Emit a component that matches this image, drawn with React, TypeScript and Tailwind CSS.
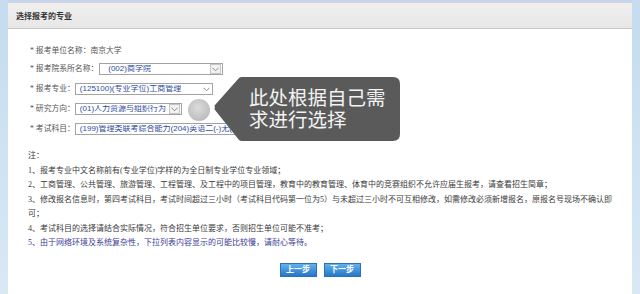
import React from 'react';

const serif = { fontFamily: '"Liberation Serif", "Noto Sans CJK SC", serif' };
const sans = { fontFamily: '"Liberation Sans", "Noto Sans CJK SC", sans-serif' };

function Chevron({ boxed }: { boxed?: boolean }) {
  return (
    <span
      className={
        boxed
          ? 'flex h-[10px] w-[11px] shrink-0 items-center justify-center border border-[#c4c4c4] bg-[#f2f2f2]'
          : 'flex h-[10px] w-[9px] shrink-0 items-center justify-center'
      }
    >
      <svg width="7" height="5" viewBox="0 0 7 5">
        <path d="M0.5 0.8 L3.5 3.8 L6.5 0.8" fill="none" stroke="#8a8a8a" strokeWidth="1" />
      </svg>
    </span>
  );
}

function FakeSelect({ text, width, padLeft, boxed }: { text: string; width: string; padLeft: string; boxed?: boolean }) {
  return (
    <div
      className={`flex h-[12px] items-center justify-between overflow-hidden border border-[#a3a3a3] bg-white pr-[1px] ${width} ${padLeft}`}
    >
      <span className="overflow-hidden whitespace-nowrap text-[8px] leading-none text-[#2d4a9c]" style={sans}>
        {text}
      </span>
      <Chevron boxed={boxed} />
    </div>
  );
}

export default function App() {
  return (
    <div className="relative h-[294px] w-[640px] overflow-hidden bg-gradient-to-b from-[#c4dcee] to-[#d9e9f4]">
      <div className="ml-[8px] flex h-full w-[624px] flex-col bg-white">
        <div className="h-[3px] bg-[#c9d4ef]" />
        <div className="h-[2px] bg-[#f4eee2]" />
        {/* header */}
        <div className="flex h-[24px] items-center border-b border-[#c6c6c6] bg-gradient-to-b from-[#efefef] to-[#e7e7e7] pl-[8px]">
          <span className="text-[8px] font-bold text-[#333]" style={serif}>
            选择报考的专业
          </span>
        </div>

        <div className="flex flex-col pl-[22px] text-[7.8px] leading-none text-[#555]" style={serif}>
          <div className="mt-[14px] flex h-[16px] items-center whitespace-nowrap">* 报考单位名称：南京大学</div>
          <div className="flex h-[20px] items-center gap-[1px] whitespace-nowrap">
            <span>* 报考院系所名称：</span>
            <FakeSelect text="(002)商学院" width="w-[124px]" padLeft="pl-[8px]" boxed />
          </div>
          <div className="flex h-[20px] items-center whitespace-nowrap">
            <span>* 报考专业：</span>
            <FakeSelect text="(125100)(专业学位)工商管理" width="w-[138px]" padLeft="pl-[4px]" />
          </div>
          <div className="flex h-[20px] items-center whitespace-nowrap">
            <span>* 研究方向：</span>
            <FakeSelect text="(01)人力资源与组织行为" width="w-[107px]" padLeft="pl-[4px]" boxed />
          </div>
          <div className="flex h-[20px] items-center whitespace-nowrap">
            <span>* 考试科目：</span>
            <FakeSelect text="(199)管理类联考综合能力(204)英语二(-)无(-)无" width="w-[196px]" padLeft="pl-[4px]" />
          </div>

          {/* notes */}
          <div className="mt-[10px] -ml-[2px] flex flex-col whitespace-nowrap text-[8px] text-[#3a3a3a] [&>div]:h-[14.5px] [&>div]:leading-[14.5px]" style={serif}>
            <div>注：</div>
            <div>1、报考专业中文名称前有(专业学位)字样的为全日制专业学位专业领域；</div>
            <div>2、工商管理、公共管理、旅游管理、工程管理、及工程中的项目管理，教育中的教育管理、体育中的竞赛组织不允许应届生报考，请查看招生简章；</div>
            <div>3、修改报名信息时，第四考试科目，考试时间超过三小时（考试科目代码第一位为5）与未超过三小时不可互相修改，如需修改必须新增报名，原报名号现场不确认即</div>
            <div>可；</div>
            <div>4、考试科目的选择请结合实际情况，符合招生单位要求，否则招生单位可能不准考；</div>
            <div className="text-[#3b3b95]">5、由于网络环境及系统复杂性，下拉列表内容显示的可能比较慢，请耐心等待。</div>
          </div>
        </div>

        {/* buttons */}
        <div className="mt-[12px] flex justify-center gap-[7px]">
          <button className="flex h-[14px] w-[37px] items-center justify-center border border-[#2a72b8] bg-gradient-to-b from-[#62b0ec] to-[#2677c6] text-[8px] font-bold text-white" style={sans}>
            上一步
          </button>
          <button className="flex h-[14px] w-[37px] items-center justify-center border border-[#2a72b8] bg-gradient-to-b from-[#62b0ec] to-[#2677c6] text-[8px] font-bold text-white" style={sans}>
            下一步
          </button>
        </div>
      </div>

      {/* annotation overlay */}
      <div className="absolute left-[188px] top-[99px] h-[22px] w-[22px] rounded-full bg-[radial-gradient(circle_at_45%_40%,#dcdcdc,#c2c2c2_60%,#a9a9a9)]" />
      <div className="absolute left-[214px] top-[77px] h-[64px] w-[186px]">
        <svg className="absolute inset-0" width="186" height="64" viewBox="0 0 186 64">
          <path d="M1 30 Q0 29 1 28 L25 1 Q26 0 28 0 H179 Q186 0 186 7 V57 Q186 64 179 64 H28 Q26 64 25 63 L1 33 Q0 32 1 30 Z" fill="#5a5a5a" />
        </svg>
        <div className="relative pl-[35px] pt-[9px] text-[19.5px] leading-[22px] text-[#f3f3f3]" style={{ fontFamily: '"Noto Sans CJK SC", sans-serif' }}>
          <div>此处根据自己需</div>
          <div>求进行选择</div>
        </div>
      </div>
    </div>
  );
}
